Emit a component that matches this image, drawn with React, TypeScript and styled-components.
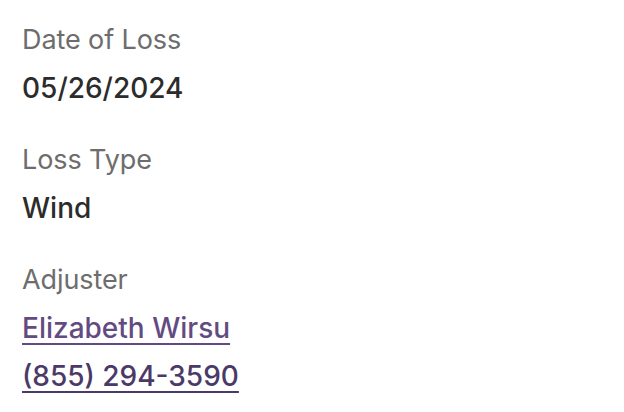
import styled, { createGlobalStyle } from "styled-components";

const GlobalStyle = createGlobalStyle`
  body {
    margin: 0;
    background: #ffffff;
    font-family: "Inter", "Liberation Sans", sans-serif;
  }
`;

const Details = styled.dl`
  margin: 0;
  padding: 16px 22px;
  display: flex;
  flex-direction: column;
  gap: 24px;
`;

const Field = styled.div`
  display: flex;
  flex-direction: column;
`;

const Label = styled.dt`
  font-size: 27px;
  line-height: 48px;
  color: #6d6d6d;
  font-weight: 400;
  letter-spacing: -0.1px;
`;

const Value = styled.dd`
  margin: 0;
  font-size: 28px;
  line-height: 48px;
  color: #2c2c2c;
  font-weight: 500;
`;

const Link = styled.a<{ $dark?: boolean }>`
  display: block;
  width: fit-content;
  color: ${(p) => (p.$dark ? "#4b3a68" : "#634b82")};
  text-decoration: underline;
  text-decoration-thickness: 2px;
  text-underline-offset: 5px;
`;

export default function App() {
  return (
    <>
      <GlobalStyle />
      <Details>
        <Field>
          <Label>Date of Loss</Label>
          <Value>05/26/2024</Value>
        </Field>
        <Field>
          <Label>Loss Type</Label>
          <Value>Wind</Value>
        </Field>
        <Field>
          <Label>Adjuster</Label>
          <Value>
            <Link href="#">Elizabeth Wirsu</Link>
            <Link href="#" $dark>
              (855) 294-3590
            </Link>
          </Value>
        </Field>
      </Details>
    </>
  );
}
